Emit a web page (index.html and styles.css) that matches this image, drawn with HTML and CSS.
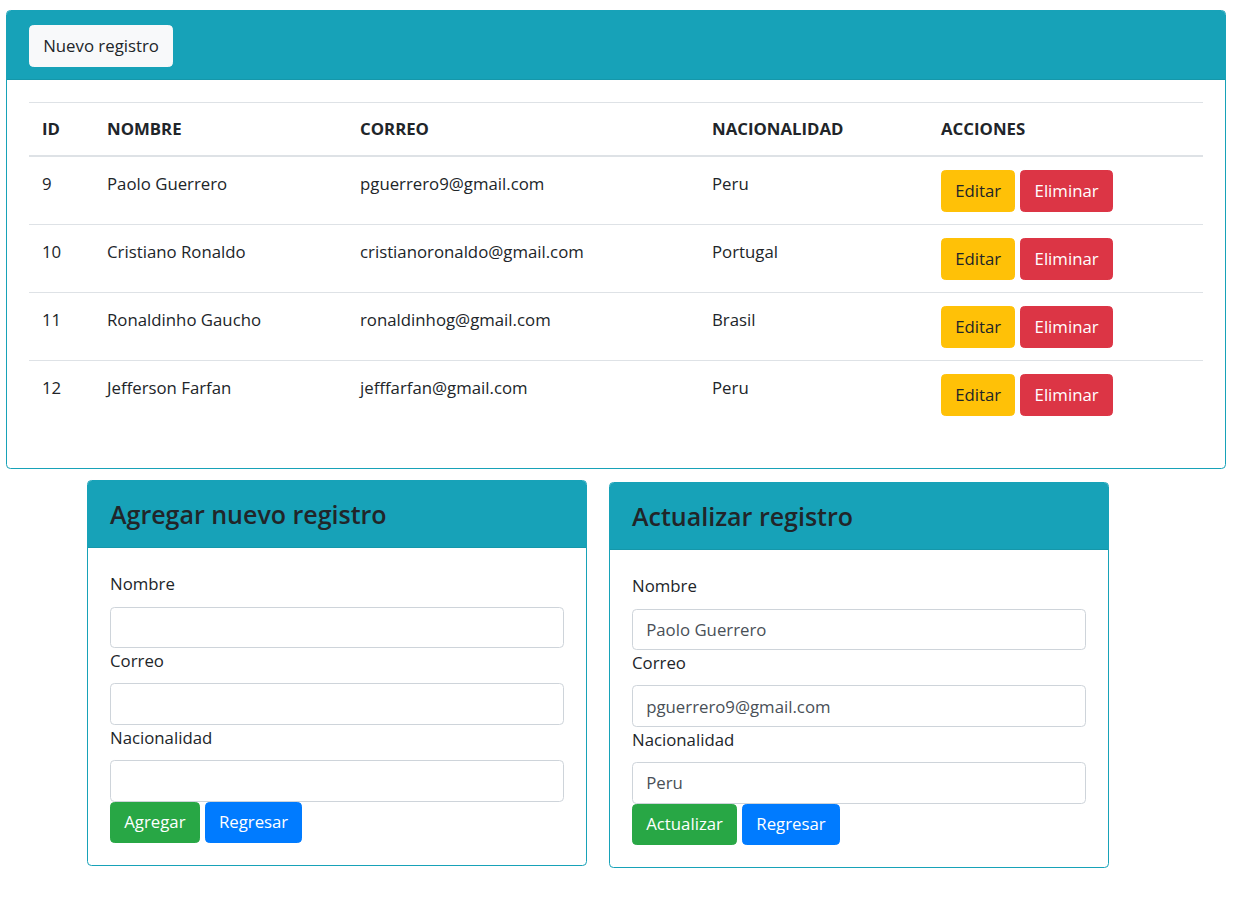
FILE: index.html
```html
<!DOCTYPE html>
<html lang="es">
<head>
<meta charset="utf-8">
<title>Registros</title>
<link rel="stylesheet" href="styles.css">
</head>
<body>
<div class="page">
  <div class="card card-main">
    <div class="card-header">
      <button class="btn btn-light">Nuevo registro</button>
    </div>
    <div class="card-body">
      <table class="table">
        <colgroup>
          <col class="c-id"><col class="c-nombre"><col class="c-correo"><col class="c-nac"><col class="c-acc">
        </colgroup>
        <thead>
          <tr><th>ID</th><th>NOMBRE</th><th>CORREO</th><th>NACIONALIDAD</th><th>ACCIONES</th></tr>
        </thead>
        <tbody>
          <tr><td>9</td><td>Paolo Guerrero</td><td>pguerrero9@gmail.com</td><td>Peru</td><td><div class="actions"><button class="btn btn-warning">Editar</button><button class="btn btn-danger">Eliminar</button></div></td></tr>
          <tr><td>10</td><td>Cristiano Ronaldo</td><td>cristianoronaldo@gmail.com</td><td>Portugal</td><td><div class="actions"><button class="btn btn-warning">Editar</button><button class="btn btn-danger">Eliminar</button></div></td></tr>
          <tr><td>11</td><td>Ronaldinho Gaucho</td><td>ronaldinhog@gmail.com</td><td>Brasil</td><td><div class="actions"><button class="btn btn-warning">Editar</button><button class="btn btn-danger">Eliminar</button></div></td></tr>
          <tr><td>12</td><td>Jefferson Farfan</td><td>jefffarfan@gmail.com</td><td>Peru</td><td><div class="actions"><button class="btn btn-warning">Editar</button><button class="btn btn-danger">Eliminar</button></div></td></tr>
        </tbody>
      </table>
    </div>
  </div>

  <div class="forms">
    <div class="card card-form">
      <div class="card-header form-header"><h3 class="title">Agregar nuevo registro</h3></div>
      <div class="card-body">
        <label class="label">Nombre</label>
        <input class="input" type="text">
        <label class="label">Correo</label>
        <input class="input" type="text">
        <label class="label">Nacionalidad</label>
        <input class="input" type="text">
        <div class="actions"><button class="btn btn-success">Agregar</button><button class="btn btn-primary">Regresar</button></div>
      </div>
    </div>
    <div class="card card-form card-offset">
      <div class="card-header form-header"><h3 class="title">Actualizar registro</h3></div>
      <div class="card-body">
        <label class="label">Nombre</label>
        <input class="input" type="text" value="Paolo Guerrero">
        <label class="label">Correo</label>
        <input class="input" type="text" value="pguerrero9@gmail.com">
        <label class="label">Nacionalidad</label>
        <input class="input" type="text" value="Peru">
        <div class="actions"><button class="btn btn-success">Actualizar</button><button class="btn btn-primary">Regresar</button></div>
      </div>
    </div>
  </div>
</div>
</body>
</html>
```
FILE: styles.css
```css
* { box-sizing: border-box; }
html, body { margin: 0; padding: 0; background: #fff; }
body {
  font-family: "Open Sans", "Noto Sans", Arial, sans-serif;
  font-size: 16.8px;
  line-height: 26.4px;
  color: #212529;
}
.page { padding: 10px 10px 0 6px; }

.card {
  border: 1px solid #17a2b8;
  border-radius: 4.4px;
  background: #fff;
  overflow: hidden;
}
.card-header {
  background: #17a2b8;
  border-bottom: 1px solid #1597aa;
  padding: 14px 22px 12.4px 22px;
}
.card-body { padding: 22px; }

.btn {
  display: inline-block;
  font-family: inherit;
  font-size: 16.8px;
  line-height: 26.4px;
  padding: 6.6px 13.2px;
  border: 1px solid transparent;
  border-radius: 4.4px;
  cursor: pointer;
  height: 41.6px;
}
.btn-light { background: #f8f9fa; border-color: #f8f9fa; color: #212529; }
.btn-warning { background: #ffc107; border-color: #ffc107; color: #212529; }
.btn-danger { background: #dc3545; border-color: #dc3545; color: #fff; }
.btn-success { background: #28a745; border-color: #28a745; color: #fff; }
.btn-primary { background: #007bff; border-color: #007bff; color: #fff; }

.actions { display: flex; gap: 5px; }

.table {
  width: 100%;
  border-collapse: collapse;
  table-layout: fixed;
  margin-bottom: 18px;
}
.c-id { width: 65px; }
.c-nombre { width: 253px; }
.c-correo { width: 352px; }
.c-nac { width: 229px; }
.c-acc { width: auto; }
.table th {
  text-align: left;
  font-weight: 700;
  padding: 13.5px 13px 12.5px 13px;
  border-top: 1px solid #dee2e6;
  border-bottom: 2px solid #dee2e6;
  vertical-align: bottom;
}
.table td {
  padding: 14px 13px 12px 13px;
  border-top: 1px solid #dee2e6;
  vertical-align: top;
}
.table td .btn { height: 42px; }
.table td .actions { margin-top: -1px; }
.table tbody tr:first-child td { border-top: 0; }

.forms {
  display: flex;
  align-items: flex-start;
  gap: 22px;
  margin-top: 11px;
  padding-left: 81px;
}
.card-form { width: 500px; }
.card-offset { margin-top: 2px; }
.form-header { padding: 15px 22px 14px 22px; }
.title {
  margin: 0;
  font-size: 25px;
  line-height: 37px;
  font-weight: 600;
  color: #212529;
}
.label {
  display: inline-block;
  margin-bottom: 8.8px;
  padding-top: 1px;
}
.input {
  display: block;
  width: 100%;
  height: 41.6px;
  padding: 6.6px 13.2px;
  font-family: inherit;
  font-size: 16.8px;
  line-height: 26.4px;
  color: #495057;
  background: #fff;
  border: 1px solid #ced4da;
  border-radius: 4.4px;
}
.card-body > .input + .label { margin-top: -1px; }
```
